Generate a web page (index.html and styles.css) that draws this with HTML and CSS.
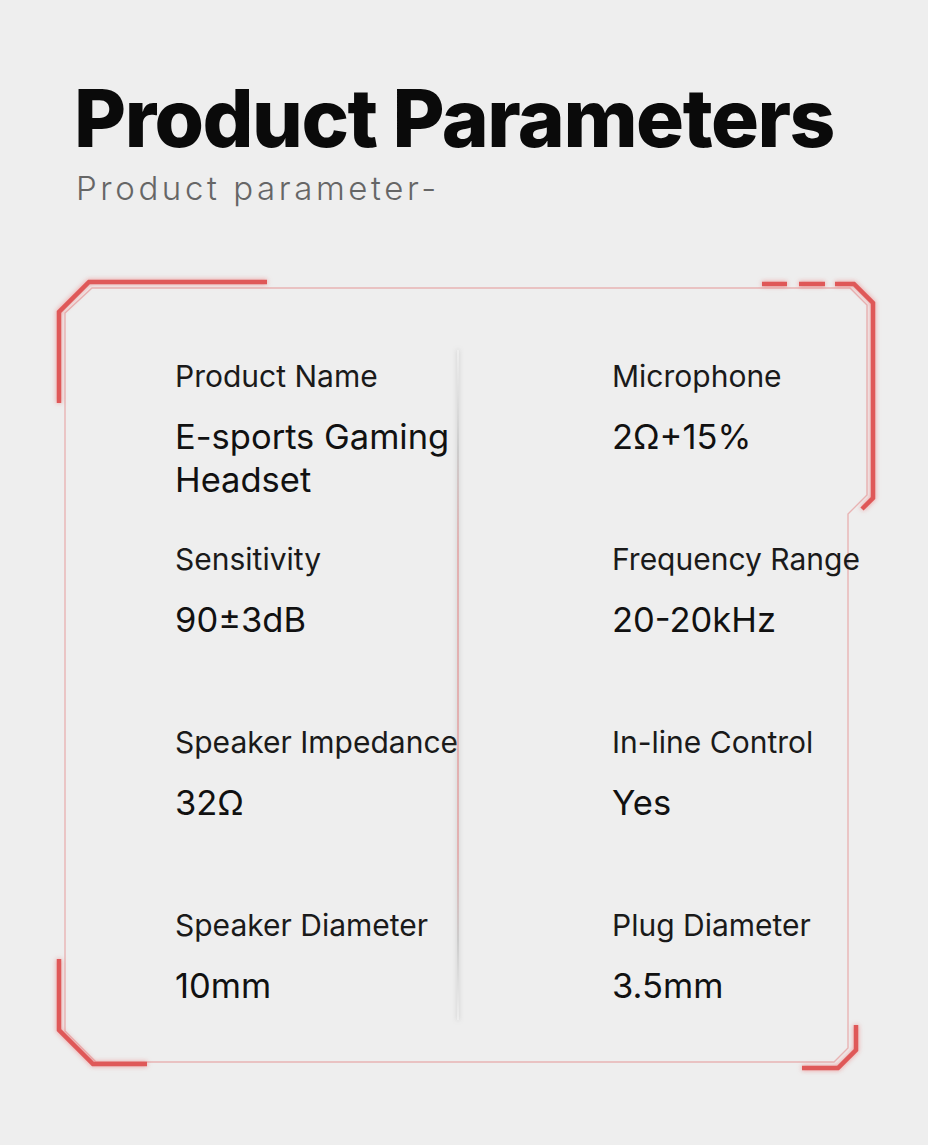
FILE: index.html
```html
<!DOCTYPE html>
<html lang="en">
<head>
<meta charset="utf-8">
<title>Product Parameters</title>
<link rel="stylesheet" href="styles.css">
</head>
<body>
<main class="page">
  <header class="heading">
    <h1 class="title">Product Parameters</h1>
    <p class="subtitle">Product parameter-</p>
  </header>

  <section class="card">
    <svg class="frame" viewBox="0 0 820 795" width="820" height="795" aria-hidden="true">
      <g transform="translate(-56,-278)">
        <path class="thin" d="M92 288 L850 288 L867 305 L867 495 L848 514 L848 1048 L834 1062 L96 1062 L65 1031 L65 313 Z"/>
        <g class="thick">
          <path d="M59 403 L59 312 L89 282 L267 282"/>
          <path d="M762 284 L787 284 M799 284 L825 284"/>
          <path d="M835 284 L854 284 L873 303 L873 498 L862 509"/>
          <path d="M59 959 L59 1030 L93 1064 L147 1064"/>
          <path d="M856 1025 L856 1050 L838 1068 L802 1068"/>
        </g>
      </g>
    </svg>

    <div class="specs">
      <div class="col">
        <div class="spec">
          <div class="label">Product Name</div>
          <div class="value">E-sports Gaming<br>Headset</div>
        </div>
        <div class="spec">
          <div class="label">Sensitivity</div>
          <div class="value">90±3dB</div>
        </div>
        <div class="spec">
          <div class="label">Speaker Impedance</div>
          <div class="value">32Ω</div>
        </div>
        <div class="spec">
          <div class="label">Speaker Diameter</div>
          <div class="value">10mm</div>
        </div>
      </div>
      <div class="divider"></div>
      <div class="col col-right">
        <div class="spec">
          <div class="label">Microphone</div>
          <div class="value">2Ω+15%</div>
        </div>
        <div class="spec">
          <div class="label">Frequency Range</div>
          <div class="value">20-20kHz</div>
        </div>
        <div class="spec">
          <div class="label">In-line Control</div>
          <div class="value">Yes</div>
        </div>
        <div class="spec">
          <div class="label">Plug Diameter</div>
          <div class="value">3.5mm</div>
        </div>
      </div>
    </div>
  </section>
</main>
</body>
</html>
```

FILE: styles.css
```css
html, body {
  margin: 0;
  padding: 0;
}

body {
  background: #eeeeee;
  font-family: Inter, "Noto Sans", "Liberation Sans", sans-serif;
  color: #111111;
  width: 928px;
  height: 1145px;
  overflow: hidden;
}

.page {
  padding-top: 77px;
}

.heading {
  padding-left: 74px;
}

.title {
  margin: 0;
  font-size: 80px;
  line-height: 82px;
  font-weight: 800;
  letter-spacing: -1.5px;
  color: #0a0a0a;
}

.subtitle {
  margin: 9px 0 0 2px;
  font-size: 33px;
  line-height: 40px;
  font-weight: 300;
  letter-spacing: 3.6px;
  color: #666666;
}

.card {
  position: relative;
  width: 820px;
  height: 795px;
  margin-top: 70px;
  margin-left: 56px;
}

.frame {
  position: absolute;
  left: 0;
  top: 0;
  overflow: visible;
}

.frame .thin {
  fill: none;
  stroke: #e8b4b4;
  stroke-width: 1.4;
}

.frame .thick path {
  fill: none;
  stroke: #df5858;
  stroke-width: 4.5;
  stroke-linecap: butt;
  stroke-linejoin: miter;
}

.frame .thick {
  filter: drop-shadow(0 0 2.5px rgba(235, 90, 90, 0.6));
}

.specs {
  position: relative;
  display: grid;
  grid-template-columns: 282px 2px 1fr;
  padding: 79.5px 0 0 119px;
}

.col {
  display: flex;
  flex-direction: column;
}

.col-right {
  padding-left: 153px;
}

.spec {
  height: 183px;
  white-space: nowrap;
}

.label {
  font-size: 30px;
  line-height: 36px;
  font-weight: 400;
  color: #1a1a1a;
}

.value {
  margin-top: 21px;
  font-size: 34.5px;
  line-height: 43px;
  font-weight: 400;
  color: #111111;
}

.divider {
  margin-top: -8px;
  height: 670px;
  background: linear-gradient(to bottom,
    rgba(200, 200, 200, 0) 0%,
    rgba(190, 190, 190, 0.7) 15%,
    rgba(225, 170, 170, 0.9) 30%,
    rgba(225, 170, 170, 0.9) 75%,
    rgba(190, 190, 190, 0.7) 88%,
    rgba(200, 200, 200, 0) 100%);
  box-shadow: 0 0 4px rgba(160, 160, 160, 0.5);
}
```
